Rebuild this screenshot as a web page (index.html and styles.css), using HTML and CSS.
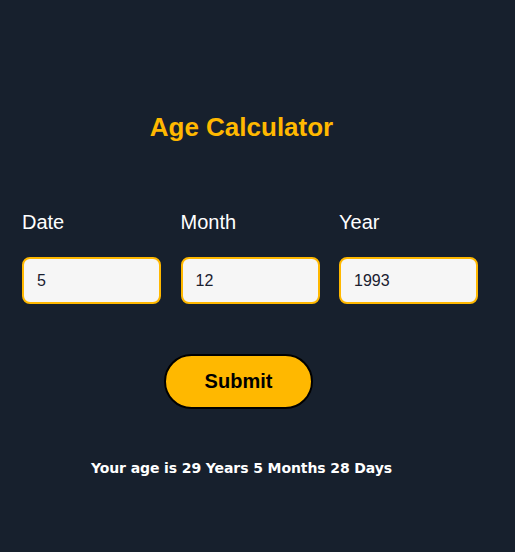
FILE: index.html
```html
<!DOCTYPE html>
<html>
<head>
<meta charset="utf-8">
<link rel="stylesheet" href="styles.css">
</head>
<body>
<div class="app">
  <h1 class="title">Age Calculator</h1>
  <div class="fields">
    <div class="field">
      <label class="label">Date</label>
      <input class="input" type="text" value="5">
    </div>
    <div class="field">
      <label class="label">Month</label>
      <input class="input" type="text" value="12">
    </div>
    <div class="field">
      <label class="label">Year</label>
      <input class="input" type="text" value="1993">
    </div>
  </div>
  <div class="actions">
    <button class="submit">Submit</button>
  </div>
  <p class="result">Your age is 29 Years 5 Months 28 Days</p>
</div>
</body>
</html>
```
FILE: styles.css
```css
html, body {
  margin: 0;
  padding: 0;
  background: #17202d;
  height: 100%;
}
body {
  font-family: "Liberation Sans", Arial, sans-serif;
  color: #ffffff;
}
.app {
  width: 439px;
  padding: 0 0 0 22px;
}
.title {
  margin: 0;
  padding-top: 112px;
  text-align: center;
  color: #ffb800;
  font-size: 26px;
  font-weight: bold;
  line-height: 30px;
}
.fields {
  display: flex;
  gap: 19.5px;
  margin-top: 68px;
}
.field {
  display: flex;
  flex-direction: column;
  gap: 23px;
}
.label {
  font-size: 20px;
  line-height: 24px;
  color: #ffffff;
}
.input {
  box-sizing: border-box;
  width: 139px;
  height: 47px;
  border: 2px solid #ffb800;
  border-radius: 8px;
  background: #f6f6f6;
  padding: 0 13px;
  font-family: "Liberation Sans", Arial, sans-serif;
  font-size: 16px;
  color: #1a2030;
  outline: none;
}
.actions {
  display: flex;
  justify-content: center;
  margin-top: 50px;
  padding-right: 6px;
}
.submit {
  box-sizing: border-box;
  width: 149px;
  height: 55px;
  border: 2px solid #000000;
  border-radius: 28px;
  background: #ffb800;
  font-family: "Liberation Sans", Arial, sans-serif;
  font-size: 20px;
  font-weight: bold;
  color: #000000;
}
.result {
  margin: 50px 0 0;
  text-align: center;
  font-family: "DejaVu Sans", Verdana, sans-serif;
  font-size: 14px;
  font-weight: bold;
  line-height: 18px;
  letter-spacing: -0.1px;
}
```
